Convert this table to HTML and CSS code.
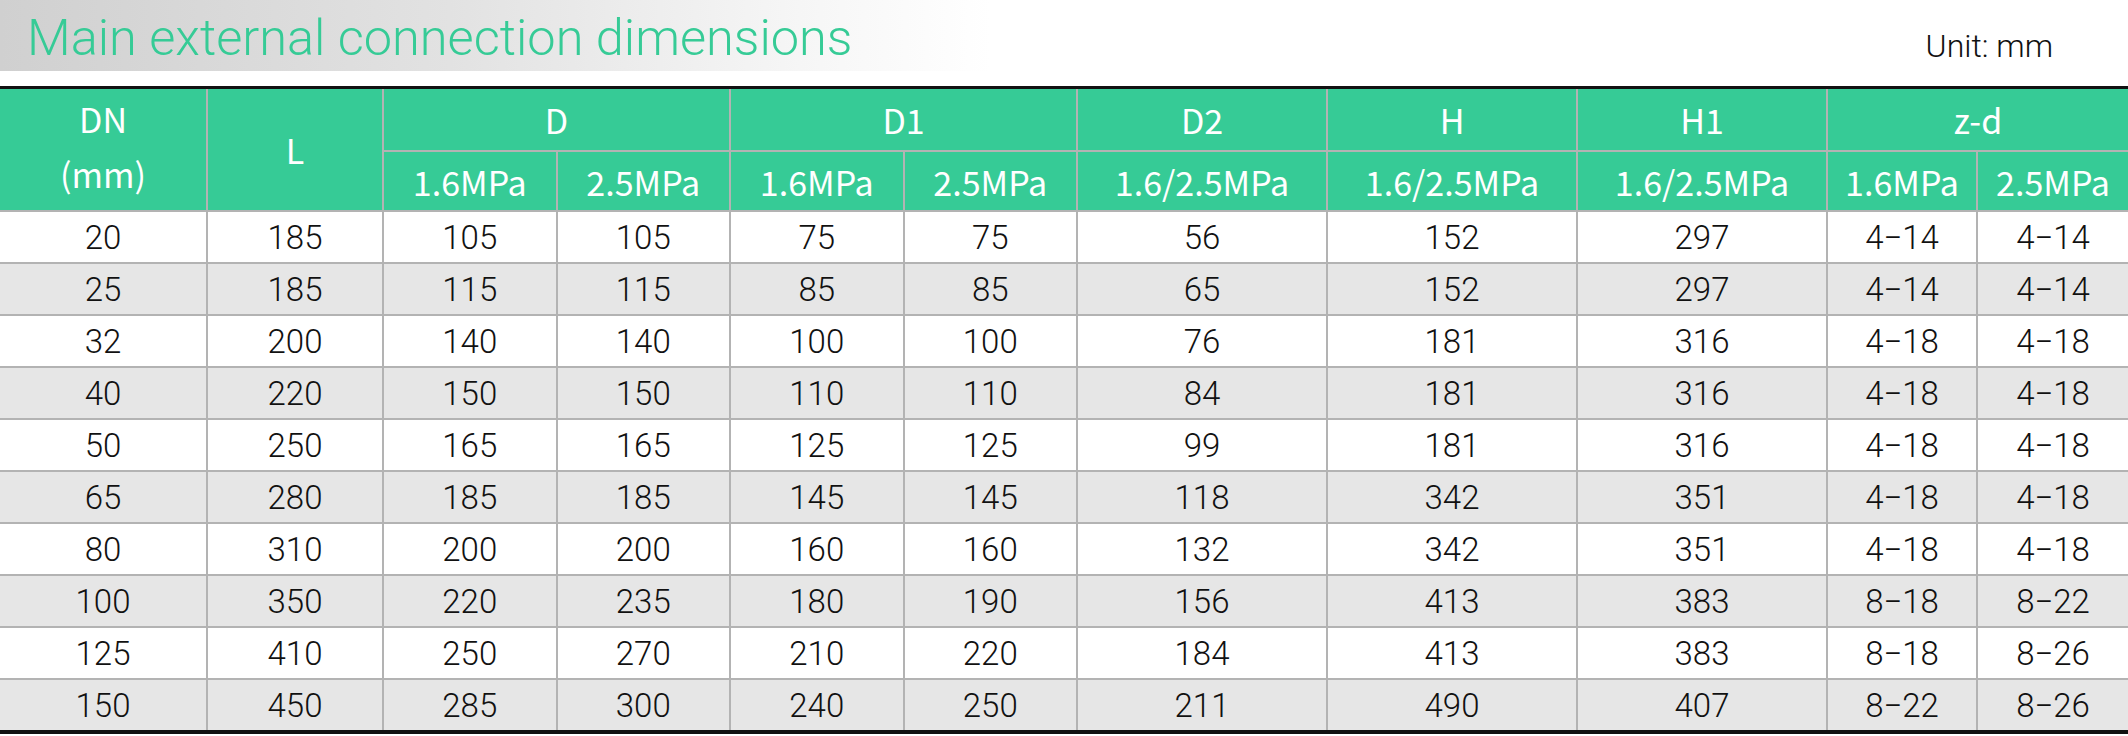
FILE: index.html
```html
<!DOCTYPE html>
<html lang="en">
<head>
<meta charset="utf-8">
<title>Main external connection dimensions</title>
<link rel="stylesheet" href="styles.css">
</head>
<body>
<div class="page">
  <header class="title-bar">
    <h1 class="title">Main external connection dimensions</h1>
    <span class="unit">Unit: mm</span>
  </header>
  <div class="table-wrap">
    <table class="dims">
      <colgroup>
        <col class="c-dn"><col class="c-l"><col class="c-s"><col class="c-s"><col class="c-s"><col class="c-s"><col class="c-w"><col class="c-w"><col class="c-w"><col class="c-z"><col class="c-z">
      </colgroup>
      <thead>
        <tr class="h1">
          <th rowspan="2" class="dn">DN<br>(mm)</th>
          <th rowspan="2">L</th>
          <th colspan="2">D</th>
          <th colspan="2">D1</th>
          <th>D2</th>
          <th>H</th>
          <th>H1</th>
          <th colspan="2" class="last">z-d</th>
        </tr>
        <tr class="h2">
          <th>1.6MPa</th><th>2.5MPa</th>
          <th>1.6MPa</th><th>2.5MPa</th>
          <th>1.6/2.5MPa</th>
          <th>1.6/2.5MPa</th>
          <th>1.6/2.5MPa</th>
          <th>1.6MPa</th><th class="last">2.5MPa</th>
        </tr>
      </thead>
      <tbody>
        <tr><td>20</td><td>185</td><td>105</td><td>105</td><td>75</td><td>75</td><td>56</td><td>152</td><td>297</td><td>4−14</td><td>4−14</td></tr>
        <tr><td>25</td><td>185</td><td>115</td><td>115</td><td>85</td><td>85</td><td>65</td><td>152</td><td>297</td><td>4−14</td><td>4−14</td></tr>
        <tr><td>32</td><td>200</td><td>140</td><td>140</td><td>100</td><td>100</td><td>76</td><td>181</td><td>316</td><td>4−18</td><td>4−18</td></tr>
        <tr><td>40</td><td>220</td><td>150</td><td>150</td><td>110</td><td>110</td><td>84</td><td>181</td><td>316</td><td>4−18</td><td>4−18</td></tr>
        <tr><td>50</td><td>250</td><td>165</td><td>165</td><td>125</td><td>125</td><td>99</td><td>181</td><td>316</td><td>4−18</td><td>4−18</td></tr>
        <tr><td>65</td><td>280</td><td>185</td><td>185</td><td>145</td><td>145</td><td>118</td><td>342</td><td>351</td><td>4−18</td><td>4−18</td></tr>
        <tr><td>80</td><td>310</td><td>200</td><td>200</td><td>160</td><td>160</td><td>132</td><td>342</td><td>351</td><td>4−18</td><td>4−18</td></tr>
        <tr><td>100</td><td>350</td><td>220</td><td>235</td><td>180</td><td>190</td><td>156</td><td>413</td><td>383</td><td>8−18</td><td>8−22</td></tr>
        <tr><td>125</td><td>410</td><td>250</td><td>270</td><td>210</td><td>220</td><td>184</td><td>413</td><td>383</td><td>8−18</td><td>8−26</td></tr>
        <tr><td>150</td><td>450</td><td>285</td><td>300</td><td>240</td><td>250</td><td>211</td><td>490</td><td>407</td><td>8−22</td><td>8−26</td></tr>
      </tbody>
    </table>
  </div>
</div>
</body>
</html>
```

FILE: styles.css
```css
* { box-sizing: border-box; }
html, body { margin: 0; padding: 0; background: #fff; }
.page { width: 2128px; }

.title-bar {
  height: 71px;
  display: flex;
  align-items: flex-start;
  justify-content: space-between;
  background: linear-gradient(to right, #d0d0d0 0px, #e2e2e2 450px, #f6f6f6 800px, #ffffff 990px);
  background-size: 990px 71px;
  background-repeat: no-repeat;
  margin-bottom: 15px;
}
.title {
  margin: 0;
  padding: 8px 0 0 27px;
  font-family: Roboto, "Liberation Sans", sans-serif;
  font-weight: 300;
  font-size: 50.5px;
  line-height: 60px;
  color: #36cb96;
}
.unit {
  font-family: Roboto, "Liberation Sans", sans-serif;
  font-weight: 300;
  font-size: 32px;
  line-height: 40px;
  color: #111;
  padding: 26px 75px 0 0;
}

.table-wrap {
  border-top: 3px solid #111;
  border-bottom: 4px solid #111;
}
.dims {
  width: 2128px;
  border-collapse: separate;
  border-spacing: 0;
  table-layout: fixed;
}
.c-dn { width: 208px; }
.c-l { width: 176px; }
.c-s { width: 173.5px; }
.c-w { width: 250px; }
.c-z { width: 150px; }

.dims th {
  background: #36cb96;
  color: #fff;
  font-family: "Noto Sans CJK KR", "Noto Sans", sans-serif;
  font-weight: 400;
  font-size: 34px;
  padding: 0;
  border-right: 2px solid #b3b3b3;
  border-bottom: 2px solid #b3b3b3;
  text-align: center;
  vertical-align: middle;
}
.dims th.last { border-right: 0; }
.dims tr.h1 th { height: 63px; }
.dims tr.h2 th { height: 60px; }
.dims th.dn { line-height: 55px; padding-bottom: 8px; }

.dims td {
  height: 52px;
  padding: 0;
  font-family: Roboto, "Liberation Sans", sans-serif;
  font-weight: 300;
  font-size: 33px;
  color: #111;
  text-align: center;
  vertical-align: middle;
  border-right: 2px solid #b3b3b3;
  border-bottom: 2px solid #b3b3b3;
}
.dims td:last-child { border-right: 0; }
.dims tbody tr:nth-child(even) td { background: #e6e6e6; }
.dims tbody tr:last-child td { border-bottom: 0; height: 50px; }
```
